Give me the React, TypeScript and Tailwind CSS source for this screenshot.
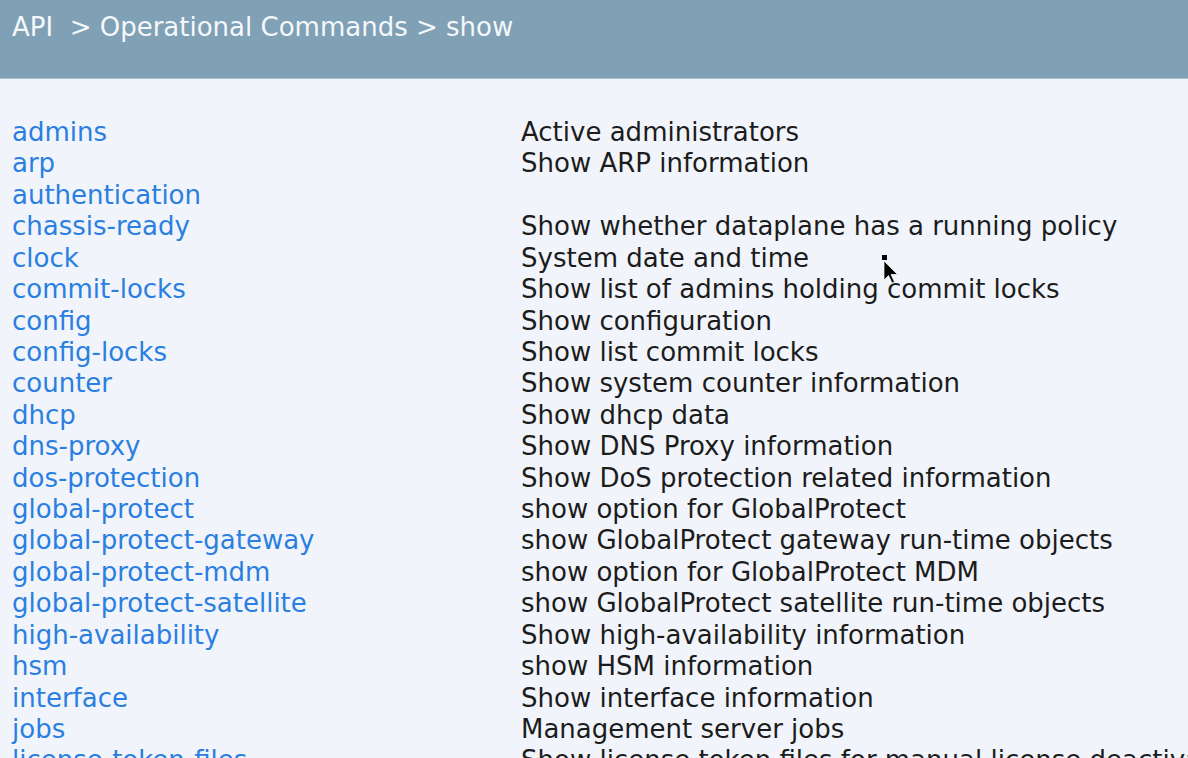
const rows: [string, string][] = [
  ['admins', 'Active administrators'],
  ['arp', 'Show ARP information'],
  ['authentication', ''],
  ['chassis-ready', 'Show whether dataplane has a running policy'],
  ['clock', 'System date and time'],
  ['commit-locks', 'Show list of admins holding commit locks'],
  ['config', 'Show configuration'],
  ['config-locks', 'Show list commit locks'],
  ['counter', 'Show system counter information'],
  ['dhcp', 'Show dhcp data'],
  ['dns-proxy', 'Show DNS Proxy information'],
  ['dos-protection', 'Show DoS protection related information'],
  ['global-protect', 'show option for GlobalProtect'],
  ['global-protect-gateway', 'show GlobalProtect gateway run-time objects'],
  ['global-protect-mdm', 'show option for GlobalProtect MDM'],
  ['global-protect-satellite', 'show GlobalProtect satellite run-time objects'],
  ['high-availability', 'Show high-availability information'],
  ['hsm', 'show HSM information'],
  ['interface', 'Show interface information'],
  ['jobs', 'Management server jobs'],
  ['license-token-files', 'Show license token files for manual license deactivation'],
];

// mouse pointer sitting over the list in the screenshot
function Cursor() {
  return (
    <svg className="absolute left-[881px] top-[253px]" width="20" height="32" viewBox="0 0 20 32">
      <rect x="1" y="2" width="5" height="5" fill="#000" />
      <path d="M3 8 L3 27 L7.5 22.5 L11 30 L13.5 29 L10 21.5 L16.5 21.5 Z" fill="#000" stroke="#fff" strokeWidth="0.7" />
    </svg>
  );
}

export default function App() {
  return (
    <div className="relative h-[758px] w-[1188px] overflow-hidden bg-[#f1f4fa] font-['DejaVu_Sans',sans-serif]">
      <div className="h-[79px] border-b border-[#a9bfcd] bg-[#7fa0b5] px-3 pt-[9px] text-[26px] leading-[36px] text-[#f4f8fb]">
        API&nbsp; &gt; Operational Commands &gt; show
      </div>
      <div className="grid grid-cols-[509px_1fr] pl-3 pt-[38px] text-[26px] leading-[31.42px] whitespace-nowrap">
        {rows.map(([name, desc]) => (
          <div key={name} className="contents">
            <a href="#" className="text-[#2a7fe0] no-underline">{name}</a>
            <span className="text-[#1c1c1c]">{desc}</span>
          </div>
        ))}
      </div>
      <Cursor />
    </div>
  );
}
